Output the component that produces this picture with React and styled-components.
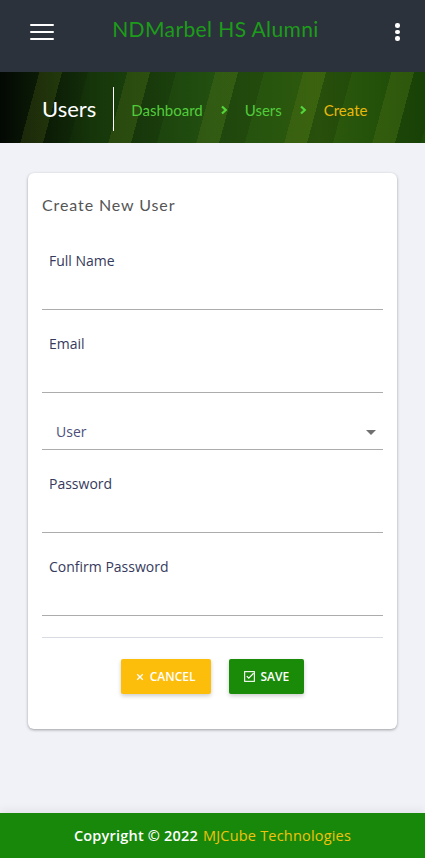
import React from "react";
import styled, { createGlobalStyle } from "styled-components";

const GlobalStyle = createGlobalStyle`
    * { box-sizing: border-box; }
    html, body { margin: 0; padding: 0; }
    body {
        background: #f1f2f7;
        font-family: "Open Sans", "Liberation Sans", sans-serif;
    }
`;

const fields = [
    { type: "input", label: "Full Name" },
    { type: "input", label: "Email" },
    { type: "select", label: "User" },
    { type: "input", label: "Password" },
    { type: "input", label: "Confirm Password" },
];

export default function App() {
    return (
        <>
            <GlobalStyle />
            <Page>
                <TopBar>
                    <MenuButton aria-label="menu">
                        <span />
                        <span />
                        <span />
                    </MenuButton>
                    <Brand>NDMarbel HS Alumni</Brand>
                    <MoreButton aria-label="more">
                        <i />
                        <i />
                        <i />
                    </MoreButton>
                </TopBar>

                <Banner>
                    <PageTitle>Users</PageTitle>
                    <Breadcrumb>
                        <Crumb>Dashboard</Crumb>
                        <Chevron />
                        <Crumb>Users</Crumb>
                        <Chevron />
                        <Crumb $active>Create</Crumb>
                    </Breadcrumb>
                </Banner>

                <Main>
                    <Card>
                        <CardTitle>Create New User</CardTitle>
                        {fields.map((f) =>
                            f.type === "select" ? (
                                <SelectField key={f.label}>
                                    <span>{f.label}</span>
                                    <Caret />
                                </SelectField>
                            ) : (
                                <Field key={f.label}>
                                    <Label>{f.label}</Label>
                                </Field>
                            )
                        )}
                        <Divider />
                        <Actions>
                            <Button $color="#fdbd0b">
                                <CloseIcon />
                                CANCEL
                            </Button>
                            <Button $color="#1a8a09">
                                <CheckIcon />
                                SAVE
                            </Button>
                        </Actions>
                    </Card>
                </Main>

                <Footer>
                    Copyright © 2022 <span>MJCube Technologies</span>
                </Footer>
            </Page>
        </>
    );
}

const Chevron = () => (
    <ChevronSvg viewBox="0 0 10 10" width="10" height="10">
        <path d="M3 1.5 L6.8 5 L3 8.5" fill="none" stroke="#52d63c" strokeWidth="2.2" />
    </ChevronSvg>
);

const CloseIcon = () => (
    <svg viewBox="0 0 10 10" width="8" height="8">
        <path d="M1.5 1.5 L8.5 8.5 M8.5 1.5 L1.5 8.5" stroke="#fff" strokeWidth="1.6" />
    </svg>
);

const CheckIcon = () => (
    <svg viewBox="0 0 12 12" width="11" height="11">
        <rect x="0.7" y="0.7" width="10.6" height="10.6" fill="none" stroke="#fff" strokeWidth="1.2" />
        <path d="M3 5.5 L5.2 7.8 L10.5 2.5" fill="none" stroke="#fff" strokeWidth="1.3" />
    </svg>
);

const Page = styled.div`
    min-height: 100vh;
    display: flex;
    flex-direction: column;
`;

const TopBar = styled.header`
    height: 72px;
    background: #2c323b;
    display: flex;
    align-items: center;
    justify-content: space-between;
    padding: 0 24px 10px 30px;
`;

const MenuButton = styled.div`
    width: 24px;
    display: flex;
    flex-direction: column;
    gap: 4.5px;
    margin-top: 2px;

    span {
        display: block;
        height: 2.5px;
        border-radius: 2px;
        background: #fff;
    }
`;

const Brand = styled.div`
    font-family: "Lato", "Noto Sans", sans-serif;
    font-size: 21px;
    letter-spacing: 0.4px;
    color: #1c9c1a;
    margin: 0 18px 6px 0;
`;

const MoreButton = styled.div`
    width: 6px;
    display: flex;
    flex-direction: column;
    gap: 2px;
    margin-top: 2px;

    i {
        width: 4.5px;
        height: 4.5px;
        border-radius: 50%;
        background: #fff;
    }
`;

const Banner = styled.div`
    height: 71px;
    display: flex;
    align-items: center;
    padding-left: 42px;
    background:
        repeating-linear-gradient(105deg, rgba(255, 255, 255, 0) 0 38px, rgba(120, 140, 30, 0.18) 38px 60px, rgba(0, 0, 0, 0.12) 60px 85px),
        linear-gradient(90deg, #030803 0%, #16360a 22%, #225010 50%, #2d5a0c 75%, #1b4a08 100%);
`;

const PageTitle = styled.h1`
    margin: 0;
    font-family: "Lato", "Noto Sans", sans-serif;
    font-weight: 400;
    font-size: 22px;
    color: #fff;
    padding-right: 17px;
    border-right: 1.5px solid #fff;
    line-height: 44px;
    margin-top: 2px;
`;

const Breadcrumb = styled.nav`
    display: flex;
    align-items: center;
    gap: 16px;
    padding-left: 17px;
    margin-top: 4px;
`;

const Crumb = styled.span`
    font-family: "Lato", "Noto Sans", sans-serif;
    font-size: 15px;
    color: ${(p) => (p.$active ? "#e9b90a" : "#52cc3c")};
`;

const ChevronSvg = styled.svg`
    display: block;
`;

const Main = styled.main`
    flex: 1;
    padding: 30px 28px 40px;
`;

const Card = styled.section`
    background: #fff;
    border-radius: 6px;
    box-shadow: 0 1px 3px rgba(0, 0, 0, 0.35);
    padding: 22px 14px 35px;
`;

const CardTitle = styled.h2`
    margin: 0 0 12px;
    font-family: "Lato", "Noto Sans", sans-serif;
    font-weight: 400;
    font-size: 16px;
    line-height: 20px;
    letter-spacing: 0.9px;
    color: #555;
`;

const Field = styled.div`
    height: 83px;
    border-bottom: 1px solid #acacac;
    padding: 24px 7px 0;
`;

const Label = styled.div`
    font-size: 14px;
    line-height: 20px;
    color: #363a5c;
`;

const SelectField = styled.div`
    height: 57px;
    border-bottom: 1px solid #acacac;
    display: flex;
    align-items: flex-end;
    justify-content: space-between;
    padding: 0 7px 7px 14px;
    font-size: 14px;
    line-height: 20px;
    color: #4b4f7a;
`;

const Caret = styled.div`
    width: 0;
    height: 0;
    border-left: 5px solid transparent;
    border-right: 5px solid transparent;
    border-top: 5px solid #707070;
    margin-bottom: 7px;
`;

const Divider = styled.div`
    margin-top: 21px;
    border-top: 1px solid #d7dbe2;
`;

const Actions = styled.div`
    display: flex;
    justify-content: center;
    gap: 18px;
    margin-top: 21px;
`;

const Button = styled.button`
    display: flex;
    align-items: center;
    gap: 6px;
    height: 35px;
    padding: 0 15px;
    border: none;
    border-radius: 2px;
    background: ${(p) => p.$color};
    color: #fff;
    font-family: "Open Sans", "Liberation Sans", sans-serif;
    font-size: 12px;
    font-weight: 600;
    box-shadow: 0 2px 4px rgba(0, 0, 0, 0.2);
`;

const Footer = styled.footer`
    height: 45px;
    background: #17880a;
    display: flex;
    align-items: center;
    justify-content: center;
    gap: 5px;
    color: #fff;
    font-size: 14.5px;
    font-weight: 600;
    letter-spacing: 0.2px;
    box-shadow: 0 -4px 8px rgba(0, 0, 0, 0.05);

    span {
        color: #f3c20c;
        font-weight: 400;
    }
`;
